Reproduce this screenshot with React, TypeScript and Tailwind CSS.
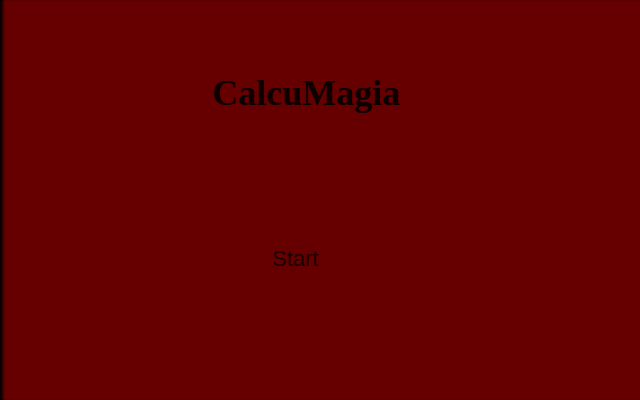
import React from 'react';

const App: React.FC = () => {
  const handleStart = () => {
    // game starts here
  };

  return (
    <div className="h-[400px] w-full overflow-hidden bg-[#660000] shadow-[inset_4px_0_3px_-1px_rgba(0,0,0,0.9)]">
      <div className="flex flex-col">
        {/* Title */}
        <h1 className="w-[612px] pt-[73px] text-center font-['Liberation_Serif',serif] text-[36px] font-bold leading-[41px] text-[#0d0000]">
          CalcuMagia
        </h1>

        {/* Start button */}
        <div className="mt-[132px] pl-[272px]">
          <button
            type="button"
            onClick={handleStart}
            className="font-['Liberation_Sans',sans-serif] text-[22px] leading-[25px] text-[#1a0000]"
          >
            Start
          </button>
        </div>
      </div>
    </div>
  );
};

export default App;
